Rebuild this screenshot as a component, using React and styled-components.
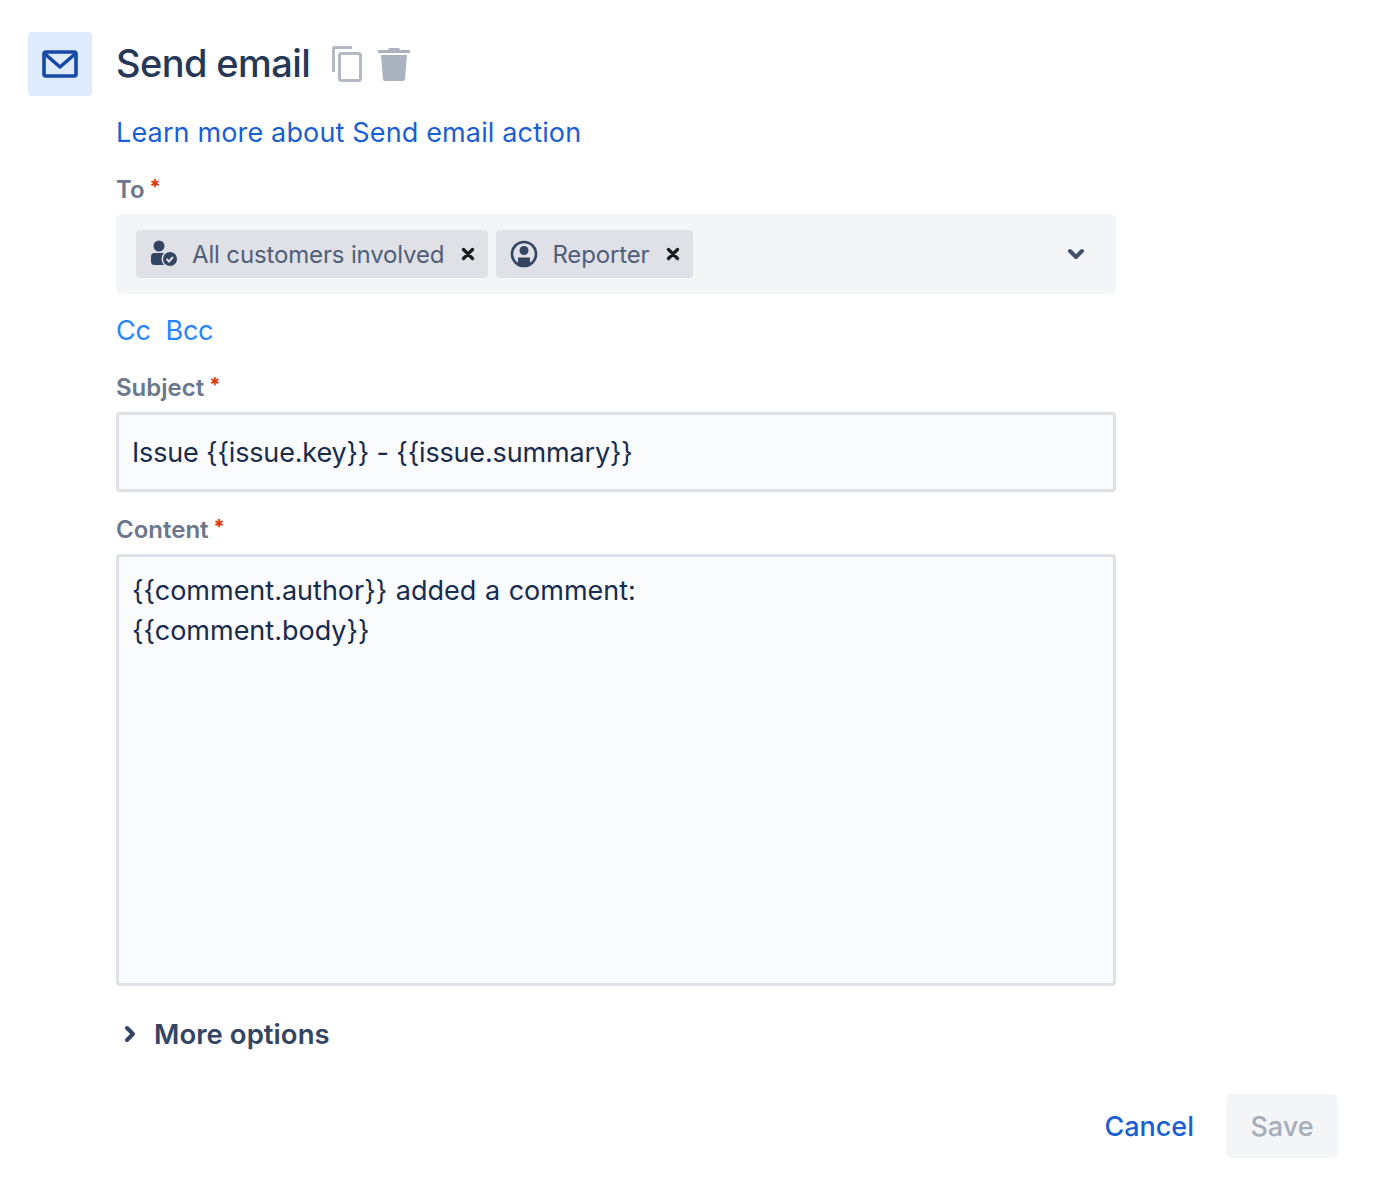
import React from 'react';
import styled, { createGlobalStyle } from 'styled-components';

const GlobalStyle = createGlobalStyle`
  html, body { margin: 0; padding: 0; background: #fff; }
  body { font-family: Inter, "Liberation Sans", sans-serif; color: #253858; }
`;

const Page = styled.div`
  box-sizing: border-box;
  width: 1400px;
  height: 1198px;
  padding: 32px 62px 0 28px;
  display: flex;
  flex-direction: column;
`;
const Top = styled.div`
  display: flex;
  gap: 24px;
`;
const IconTile = styled.div`
  width: 64px;
  height: 64px;
  flex: none;
  border-radius: 4px;
  background: #deebff;
  display: flex;
  align-items: center;
  justify-content: center;
  color: #1449a5;
`;
const Main = styled.div`
  width: 1000px;
  display: flex;
  flex-direction: column;
`;
const TitleRow = styled.div`
  height: 64px;
  display: flex;
  align-items: center;
  gap: 22px;
`;
const Title = styled.h1`
  margin: 0 0 2px;
  font-size: 38px;
  font-weight: 500;
  letter-spacing: -0.6px;
  color: #253858;
`;
const TitleIcons = styled.div`
  display: flex;
  align-items: center;
  gap: 16px;
`;
const LearnLink = styled.a`
  margin-top: 19px;
  font-size: 27px;
  line-height: 36px;
  letter-spacing: 0.15px;
  color: #1a5ed4;
`;
const Label = styled.div`
  margin-top: ${(p) => p.$top}px;
  height: 32px;
  display: flex;
  gap: 5px;
  font-size: 24px;
  line-height: 32px;
  font-weight: 600;
  color: #6b778c;
`;
const Star = styled.span`
  color: #de350b;
  font-size: 20px;
  line-height: 26px;
  font-weight: 700;
`;
const SelectBox = styled.div`
  margin-top: 8px;
  height: 80px;
  box-sizing: border-box;
  padding: 0 30px 0 20px;
  border-radius: 6px;
  background: #f4f5f7;
  display: flex;
  align-items: center;
  gap: 8px;
`;
const Tag = styled.div`
  height: 48px;
  padding: 0 12px 0 14px;
  border-radius: 4px;
  background: #dfe1e6;
  display: flex;
  align-items: center;
  font-size: 24px;
  letter-spacing: -0.15px;
  color: #505f79;
`;
const TagText = styled.span`
  margin: 0 16px 0 12px;
`;
const Chevron = styled.div`
  margin-left: auto;
  display: flex;
  color: #42526e;
`;
const CcRow = styled.div`
  margin-top: 19px;
  display: flex;
  gap: 15px;
  font-size: 27px;
  line-height: 36px;
  letter-spacing: -0.3px;
  color: #2684ff;
`;
const Field = styled.div`
  margin-top: 8px;
  box-sizing: border-box;
  height: ${(p) => p.$height}px;
  padding: ${(p) => p.$pad}px 13px 0;
  border: 3px solid #dfe1e6;
  border-radius: 4px;
  background: #fafbfc;
  font-size: 27px;
  line-height: 40px;
  letter-spacing: ${(p) => p.$spacing}px;
  word-spacing: ${(p) => p.$words}px;
  color: #172b4d;
`;
const More = styled.div`
  margin-top: 30px;
  padding-left: 7px;
  display: flex;
  align-items: center;
  gap: 17px;
  font-size: 27.5px;
  line-height: 36px;
  letter-spacing: 0.05px;
  font-weight: 600;
  color: #344563;
`;
const Footer = styled.div`
  margin-top: 42px;
  display: flex;
  justify-content: flex-end;
  align-items: center;
  gap: 32px;
`;
const CancelButton = styled.div`
  font-size: 27px;
  font-weight: 500;
  color: #1a5ed4;
`;
const SaveButton = styled.div`
  width: 112px;
  height: 64px;
  border-radius: 6px;
  background: #f4f5f7;
  display: flex;
  align-items: center;
  justify-content: center;
  font-size: 27px;
  font-weight: 500;
  color: #a5adba;
`;

const MailIcon = () => (
  <svg width="40" height="40" viewBox="0 0 40 40" fill="none" stroke="currentColor" strokeWidth="3.6" strokeLinejoin="round">
    <rect x="4" y="8" width="32" height="24" rx="2" />
    <path d="M5 10l15 13 15-13" />
  </svg>
);
const CopyIcon = () => (
  <svg width="30" height="36" viewBox="0 0 30 36" fill="none" stroke="#b3bac5" strokeWidth="3">
    <path d="M1.5 26V2.5a1 1 0 0 1 1-1H20" />
    <rect x="7.5" y="7.5" width="21" height="27" rx="2" />
  </svg>
);
const TrashIcon = () => (
  <svg width="32" height="34" viewBox="0 0 32 34" fill="#aab2bf">
    <path d="M11 1h10l1 2h9a1 1 0 0 1 1 1v2H0V4a1 1 0 0 1 1-1h9zM3 8h26l-2 24a2 2 0 0 1-2 2H7a2 2 0 0 1-2-2z" />
  </svg>
);
const ChevronDown = () => (
  <svg width="20" height="14" viewBox="0 0 20 14" fill="none" stroke="currentColor" strokeWidth="4" strokeLinecap="round" strokeLinejoin="round">
    <path d="M4 4l6 6 6-6" />
  </svg>
);
const ChevronRight = () => (
  <svg width="14" height="20" viewBox="0 0 14 20" fill="none" stroke="currentColor" strokeWidth="4" strokeLinecap="round" strokeLinejoin="round">
    <path d="M4 4l6 6-6 6" />
  </svg>
);
const CloseIcon = () => (
  <svg width="16" height="16" viewBox="0 0 16 16" fill="none" stroke="#1a1a1a" strokeWidth="3.2" strokeLinecap="round">
    <path d="M3.5 3.5l9 9M12.5 3.5l-9 9" />
  </svg>
);
const CustomersIcon = () => (
  <svg width="30" height="30" viewBox="0 0 30 30" fill="#344563">
    <circle cx="9" cy="7" r="5.5" />
    <rect x="1" y="14" width="17" height="12" rx="3.5" />
    <circle cx="20" cy="20" r="8.5" fill="#dfe1e6" />
    <circle cx="20" cy="20" r="7" />
    <path d="M16.5 20l2.5 2.5 4-4.5" fill="none" stroke="#dfe1e6" strokeWidth="2" />
  </svg>
);
const PersonIcon = () => (
  <svg width="30" height="30" viewBox="0 0 30 30">
    <circle cx="14" cy="15" r="12" fill="none" stroke="#344563" strokeWidth="2.6" />
    <circle cx="14" cy="11.5" r="4.5" fill="#344563" />
    <path d="M8 18.5h12v6.5a12 12 0 0 1-12 0z" fill="#344563" />
  </svg>
);

export default function App() {
  return (
    <Page>
      <GlobalStyle />
      <Top>
        <IconTile><MailIcon /></IconTile>
        <Main>
          <TitleRow>
            <Title>Send email</Title>
            <TitleIcons><CopyIcon /><TrashIcon /></TitleIcons>
          </TitleRow>
          <LearnLink>Learn more about Send email action</LearnLink>
          <Label $top={23}>To<Star>*</Star></Label>
          <SelectBox>
            <Tag><CustomersIcon /><TagText>All customers involved</TagText><CloseIcon /></Tag>
            <Tag><PersonIcon /><TagText>Reporter</TagText><CloseIcon /></Tag>
            <Chevron><ChevronDown /></Chevron>
          </SelectBox>
          <CcRow><span>Cc</span><span>Bcc</span></CcRow>
          <Label $top={23}>Subject<Star>*</Star></Label>
          <Field $height={80} $pad={18} $spacing={-0.16} $words={0}>{'Issue {{issue.key}} - {{issue.summary}}'}</Field>
          <Label $top={22}>Content<Star>*</Star></Label>
          <Field $height={432} $pad={14} $spacing={0} $words={1}>
            <div>{'{{comment.author}} added a comment:'}</div>
            <div>{'{{comment.body}}'}</div>
          </Field>
          <More><ChevronRight />More options</More>
        </Main>
      </Top>
      <Footer>
        <CancelButton>Cancel</CancelButton>
        <SaveButton>Save</SaveButton>
      </Footer>
    </Page>
  );
}
